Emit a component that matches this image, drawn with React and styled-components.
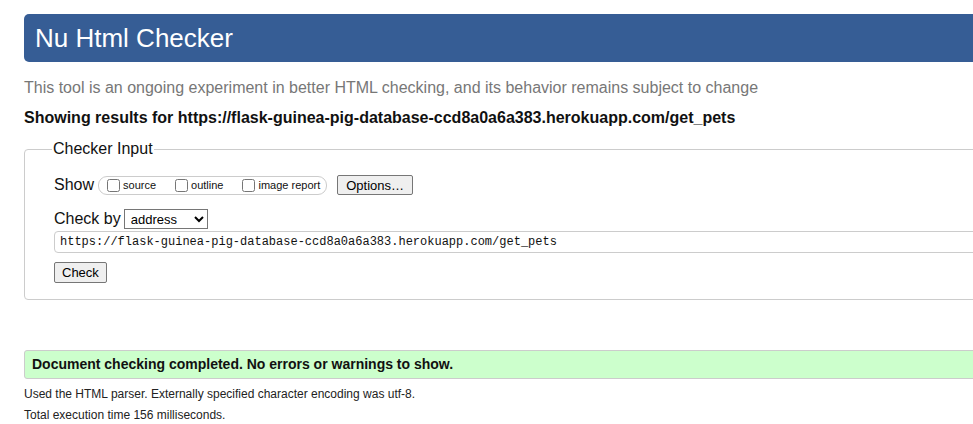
import React from "react";
import styled, { createGlobalStyle } from "styled-components";

const Global = createGlobalStyle`
  html, body {
    margin: 0;
    padding: 0;
    background: #fff;
    overflow: hidden;
  }
  body {
    font-family: "Liberation Sans", Arial, sans-serif;
    color: #000;
  }
`;

const Page = styled.div`
  width: 1100px;
  padding: 14px 0 0 24px;
`;

const Header = styled.h1`
  margin: 0;
  height: 48px;
  background: #365d95;
  border-radius: 5px;
  color: #fff;
  font-weight: normal;
  font-size: 26px;
  line-height: 48px;
  padding-left: 11px;
`;

const Intro = styled.p`
  margin: 17px 0 0;
  font-size: 16px;
  line-height: 18px;
  color: #777;
`;

const Results = styled.p`
  margin: 12px 0 0;
  font-size: 16px;
  line-height: 18px;
  font-weight: bold;
  color: #111;
`;

const Fieldset = styled.fieldset`
  margin: 13px 0 0;
  padding: 8px 29px 16px 29px;
  border: 1px solid #ccc;
  border-radius: 4px;
  min-width: 0;
`;

const Legend = styled.legend`
  font-size: 16px;
  line-height: 18px;
  padding: 0 1px;
  margin-left: -2px;
  color: #111;
`;

const Row = styled.div`
  display: flex;
  align-items: center;
  gap: ${p => p.gap || 0}px;
  margin-top: ${p => p.top || 0}px;
`;

const Label = styled.span`
  font-size: 16px;
  line-height: 18px;
  color: #111;
`;

const Pill = styled.span`
  display: inline-flex;
  align-items: center;
  height: 17px;
  padding: 0 6px 0 5px;
  border: 1px solid #ccc;
  border-radius: 9px;
`;

const Opt = styled.label`
  display: inline-flex;
  align-items: center;
  font-size: 11px;
  color: #111;
  margin-right: ${p => p.gap || 0}px;
  input {
    margin: 0 3px 0 3px;
    width: 13px;
    height: 13px;
  }
`;

const Button = styled.button`
  font-family: "Liberation Sans", Arial, sans-serif;
  font-size: 13px;
  height: ${p => p.h || 20}px;
  padding: 0 ${p => p.pad || 7}px;
  background: #efefef;
  border: 1px solid #767676;
  border-radius: 2px;
  color: #000;
`;

const Select = styled.select`
  font-family: "Liberation Sans", Arial, sans-serif;
  font-size: 13px;
  width: 84px;
  height: 20px;
  margin-left: 3px;
  border: 1px solid #767676;
  border-radius: 0;
  background: #fff;
  color: #000;
  padding: 0 2px;
`;

const UrlInput = styled.input`
  display: block;
  box-sizing: border-box;
  width: 100%;
  height: 22px;
  margin-top: 2px;
  padding: 0 5px;
  border: 1px solid #ccc;
  border-radius: 4px;
  font-family: "Liberation Mono", "Courier New", monospace;
  font-size: 12px;
  color: #111;
`;

const Success = styled.div`
  margin-top: 50px;
  height: 29px;
  box-sizing: border-box;
  border: 1px solid #ccc;
  border-radius: 3px;
  background: #ccffcc;
  padding-left: 7px;
  font-size: 14px;
  font-weight: bold;
  line-height: 27px;
  color: #111;
`;

const Note = styled.p`
  margin: ${p => p.top || 0}px 0 0;
  font-size: 12px;
  line-height: 14px;
  color: #222;
`;

const url = "https://flask-guinea-pig-database-ccd8a0a6a383.herokuapp.com/get_pets";

export default function App() {
  return (
    <Page>
      <Global />
      <Header>Nu Html Checker</Header>
      <Intro>This tool is an ongoing experiment in better HTML checking, and its behavior remains subject to change</Intro>
      <Results>Showing results for {url}</Results>
      <Fieldset>
        <Legend>Checker Input</Legend>
        <Row top={9} gap={10}>
          <Row gap={4}>
            <Label>Show</Label>
            <Pill>
              <Opt gap={16}><input type="checkbox" />source</Opt>
              <Opt gap={16}><input type="checkbox" />outline</Opt>
              <Opt><input type="checkbox" />image report</Opt>
            </Pill>
          </Row>
          <Button pad={8}>Options…</Button>
        </Row>
        <Row top={14}>
          <Label>Check by</Label>
          <Select defaultValue="address">
            <option value="address">address</option>
            <option value="file">file upload</option>
            <option value="text">text input</option>
          </Select>
        </Row>
        <UrlInput defaultValue={url} />
        <Row top={9}>
          <Button h={21} pad={7}>Check</Button>
        </Row>
      </Fieldset>
      <Success>Document checking completed. No errors or warnings to show.</Success>
      <Note top={8}>Used the HTML parser. Externally specified character encoding was utf-8.</Note>
      <Note top={7}>Total execution time 156 milliseconds.</Note>
    </Page>
  );
}
